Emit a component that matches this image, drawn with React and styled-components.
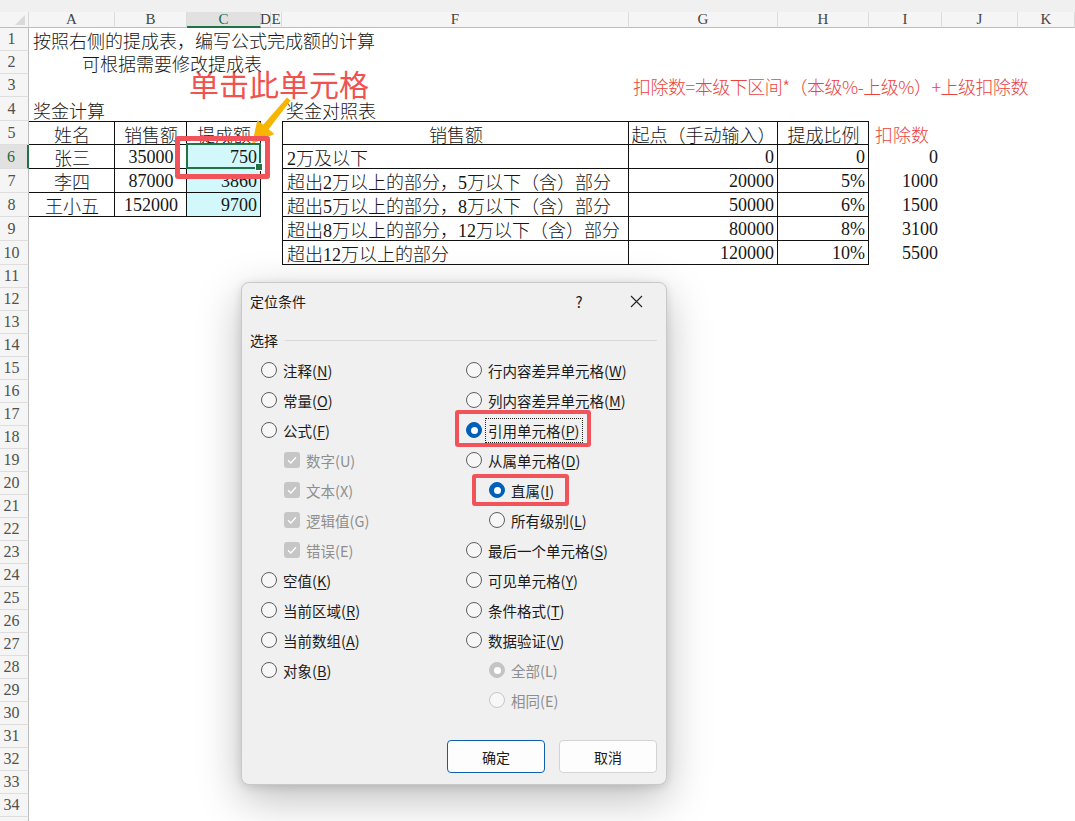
import React from 'react';
import styled, { createGlobalStyle, css } from 'styled-components';

const GlobalStyle = createGlobalStyle`
  html, body { margin: 0; padding: 0; background: #ffffff; overflow: hidden; }
  * { box-sizing: border-box; }
`;

const CELL_FONT = `"Liberation Serif", "Noto Sans CJK SC", serif`;
const UI_FONT = `"Noto Sans CJK SC", "Noto Sans", sans-serif`;

const COL_WIDTHS = [29, 86, 72, 74, 10, 11, 347, 149, 91, 73, 76, 57];
const LETTERS = ['A', 'B', 'C', 'D', 'E', 'F', 'G', 'H', 'I', 'J', 'K'];
const ROW_COUNT = 35;
const LAST_LABELLED_ROW = 34;
const rowHeight = (n) => (n <= 3 ? 23 : n <= 10 ? 24 : 23);

/* ---------- sheet cell contents ---------- */
const BOX = { box: true };
const cells = {
  A1: { text: '按照右侧的提成表，编写公式完成额的计算' },
  A2: { text: '可根据需要修改提成表', indent: 53 },
  G3: { text: '扣除数=本级下区间*（本级%-上级%）+上级扣除数', red: true, ui: true, tight: true },
  A4: { text: '奖金计算' },
  F4: { text: '奖金对照表' },

  A5: { ...BOX, top: true, text: '姓名', align: 'center' },
  B5: { ...BOX, top: true, text: '销售额', align: 'center' },
  C5: { ...BOX, top: true, text: '提成额', align: 'center' },
  A6: { ...BOX, text: '张三', align: 'center' },
  B6: { ...BOX, text: '35000', align: 'center' },
  C6: { ...BOX, text: '750', align: 'right', fill: true, selected: true },
  A7: { ...BOX, text: '李四', align: 'center' },
  B7: { ...BOX, text: '87000', align: 'center' },
  C7: { ...BOX, text: '3860', align: 'right', fill: true },
  A8: { ...BOX, text: '王小五', align: 'center' },
  B8: { ...BOX, text: '152000', align: 'center' },
  C8: { ...BOX, text: '9700', align: 'right', fill: true },

  F5: { ...BOX, top: true, left: true, text: '销售额', align: 'center' },
  G5: { ...BOX, top: true, text: '起点（手动输入）', align: 'center' },
  H5: { ...BOX, top: true, text: '提成比例', align: 'center' },
  I5: { text: '扣除数', red: true, indent: 6 },
};

const tiers = [
  ['2万及以下', '0', '0', '0'],
  ['超出2万以上的部分，5万以下（含）部分', '20000', '5%', '1000'],
  ['超出5万以上的部分，8万以下（含）部分', '50000', '6%', '1500'],
  ['超出8万以上的部分，12万以下（含）部分', '80000', '8%', '3100'],
  ['超出12万以上的部分', '120000', '10%', '5500'],
];
tiers.forEach(([label, start, rate, deduct], i) => {
  const r = 6 + i;
  cells[`F${r}`] = { ...BOX, left: true, text: label };
  cells[`G${r}`] = { ...BOX, text: start, align: 'right' };
  cells[`H${r}`] = { ...BOX, text: rate, align: 'right' };
  cells[`I${r}`] = { text: deduct, align: 'right', pr: 4 };
});

/* ---------- sheet ---------- */
const Page = styled.div`
  position: relative;
  width: 1075px;
  height: 821px;
  overflow: hidden;
  background: #ffffff;
`;

const TopStrip = styled.div`
  height: 12px;
  background: #f0f0f0;
`;

const Sheet = styled.div`
  display: grid;
  grid-template-columns: ${COL_WIDTHS.map((w) => `${w}px`).join(' ')};
  grid-template-rows: 16px ${Array.from({ length: ROW_COUNT }, (_, i) => `${rowHeight(i + 1)}px`).join(' ')};
`;

const Corner = styled.div`
  position: relative;
  background: #f5f5f5;
  border-right: 1px solid #d6d6d6;
  border-bottom: 1px solid #bdbdbd;
  &::after {
    content: '';
    position: absolute;
    right: 3px;
    bottom: 2px;
    width: 0;
    height: 0;
    border-left: 10px solid transparent;
    border-bottom: 10px solid #dadada;
  }
`;

const ColHead = styled.div`
  display: flex;
  align-items: center;
  justify-content: center;
  font-family: ${CELL_FONT};
  font-size: 15px;
  line-height: 1;
  color: ${(p) => (p.$active ? '#1e6b43' : '#444')};
  background: ${(p) => (p.$active ? '#e1e1e1' : '#f5f5f5')};
  border-right: 1px solid #dcdcdc;
  border-bottom: ${(p) => (p.$active ? '2px solid #217346' : '1px solid #bdbdbd')};
  white-space: nowrap;
  overflow: visible;
`;

const RowHead = styled.div`
  display: flex;
  align-items: center;
  justify-content: center;
  padding-right: 5px;
  font-family: ${CELL_FONT};
  font-size: 16px;
  color: ${(p) => (p.$active ? '#1e6b43' : '#505050')};
  background: ${(p) => (p.$active ? '#e1e1e1' : '#f5f5f5')};
  border-right: ${(p) => (p.$active ? '2px solid #217346' : '1px solid #bdbdbd')};
  border-bottom: 1px solid #dedede;
`;

const Cell = styled.div`
  position: relative;
  display: flex;
  align-items: center;
  justify-content: ${(p) => (p.$align === 'center' ? 'center' : p.$align === 'right' ? 'flex-end' : 'flex-start')};
  padding: 1px ${(p) => p.$pr ?? 3}px 0 ${(p) => p.$indent ?? 4}px;
  font-family: ${(p) => (p.$ui ? UI_FONT : CELL_FONT)};
  font-size: 18px;
  font-weight: 300;
  letter-spacing: ${(p) => (p.$tight ? '-0.5px' : '0')};
  color: ${(p) => (p.$red ? '#ea4440' : '#161616')};
  white-space: nowrap;
  overflow: visible;
  background: ${(p) => (p.$fill ? '#d3f8fb' : 'transparent')};
  ${(p) => p.$box && css`
    border-right: 1px solid #111;
    border-bottom: 1px solid #111;
  `}
  ${(p) => p.$top && css`border-top: 1px solid #111;`}
  ${(p) => p.$left && css`border-left: 1px solid #111;`}
`;

const CellText = styled.span`
  position: relative;
  z-index: 1;
`;

/* the active-cell frame and its fill handle */
const Selection = styled.span`
  position: absolute;
  top: -2px;
  left: -1px;
  right: -1px;
  bottom: -1px;
  border: 2px solid #217346;
  z-index: 2;
  &::after {
    content: '';
    position: absolute;
    right: -4px;
    bottom: -4px;
    width: 6px;
    height: 6px;
    background: #217346;
    border: 1px solid #ffffff;
  }
`;

/* ---------- annotations drawn on top of the sheet ---------- */
const Callout = styled.div`
  position: absolute;
  left: 189px;
  top: 65px;
  font-family: ${UI_FONT};
  font-size: 30px;
  line-height: 36px;
  color: #f0524f;
  white-space: nowrap;
`;

const ArrowSvg = styled.svg`
  position: absolute;
  left: 240px;
  top: 92px;
`;

const Frame = styled.div`
  position: absolute;
  left: ${(p) => p.$x}px;
  top: ${(p) => p.$y}px;
  width: ${(p) => p.$w}px;
  height: ${(p) => p.$h}px;
  border: ${(p) => p.$t}px solid #f0545a;
  border-radius: 3px;
  pointer-events: none;
  z-index: 3;
`;

/* ---------- dialog ---------- */
const Dialog = styled.div`
  position: absolute;
  left: 241px;
  top: 282px;
  width: 426px;
  height: 503px;
  display: flex;
  flex-direction: column;
  background: #f0f0f0;
  border: 1px solid #c9c9c9;
  border-radius: 8px;
  box-shadow: 0 14px 44px rgba(0, 0, 0, 0.26), 0 2px 10px rgba(0, 0, 0, 0.12);
  font-family: ${UI_FONT};
  color: #1b1b1b;
  z-index: 5;
`;

const TitleBar = styled.div`
  display: flex;
  align-items: center;
  height: 36px;
  padding: 0 10px 0 8px;
`;

const Title = styled.div`
  flex: 1;
  font-size: 14px;
`;

const TitleButton = styled.div`
  width: 40px;
  height: 30px;
  display: flex;
  align-items: center;
  justify-content: center;
  font-size: 15px;
  color: #222;
  margin-left: ${(p) => p.$gap ?? 0}px;
`;

const GroupHead = styled.div`
  display: flex;
  align-items: center;
  margin-top: 11px;
  height: 20px;
  padding: 0 9px 0 8px;
  font-size: 14px;
  &::after {
    content: '';
    flex: 1;
    height: 1px;
    margin-left: 7px;
    background: #d9d9d9;
  }
`;

const Options = styled.div`
  display: grid;
  grid-template-columns: 205px 1fr;
  margin-top: 5px;
  padding-left: 19px;
`;

const Column = styled.div`
  display: flex;
  flex-direction: column;
`;

const Option = styled.div`
  position: relative;
  display: flex;
  align-items: center;
  gap: 6px;
  height: 30px;
  padding-left: ${(p) => (p.$indent ? 23 : 0)}px;
  font-size: 14.5px;
  color: ${(p) => (p.$disabled ? '#8e8e8e' : '#1b1b1b')};
  white-space: nowrap;
  u { text-underline-offset: 2px; text-decoration-thickness: 1px; }
`;

const Label = styled.span`
  ${(p) => p.$focus && css`
    outline: 1px dotted #222;
    outline-offset: 1px;
    padding: 0 1px;
    margin-left: -1px;
  `}
`;

const RadioDot = styled.span`
  position: relative;
  flex: none;
  width: 16px;
  height: 16px;
  border-radius: 50%;
  border: 1px solid ${(p) => (p.$checked ? (p.$disabled ? '#c4c4c4' : '#005fb8') : p.$disabled ? '#c6c6c6' : '#5e5e5e')};
  background: ${(p) => (p.$checked ? (p.$disabled ? '#c4c4c4' : '#005fb8') : '#f7f7f7')};
  ${(p) => p.$checked && css`
    &::after {
      content: '';
      position: absolute;
      left: 50%;
      top: 50%;
      width: 7px;
      height: 7px;
      margin: -3.5px 0 0 -3.5px;
      border-radius: 50%;
      background: #ffffff;
    }
  `}
`;

const CheckBox = styled.span`
  flex: none;
  width: 16px;
  height: 16px;
  border-radius: 3px;
  background: #c6c6c6;
  display: flex;
  align-items: center;
  justify-content: center;
`;

const Footer = styled.div`
  margin-top: auto;
  display: flex;
  justify-content: flex-end;
  gap: 14px;
  padding: 0 9px 11px 0;
`;

const Button = styled.div`
  width: 98px;
  height: 33px;
  display: flex;
  align-items: center;
  justify-content: center;
  font-size: 14px;
  color: #1b1b1b;
  background: #fdfdfd;
  border-radius: 4px;
  border: 1px solid ${(p) => (p.$primary ? '#0f5fae' : '#d3d3d3')};
  ${(p) => p.$primary && css`box-shadow: inset 0 0 0 1px #ffffff;`}
`;

const Mark = styled.span`
  position: absolute;
  left: ${(p) => p.$l}px;
  top: ${(p) => p.$t}px;
  width: ${(p) => p.$w}px;
  height: ${(p) => p.$h}px;
  border: 4px solid #f0545a;
  border-radius: 3px;
  pointer-events: none;
`;

const Check = () => (
  <svg width="10" height="8" viewBox="0 0 10 8">
    <path d="M1 4.2 L3.8 7 L9 1.2" fill="none" stroke="#ffffff" strokeWidth="1.3" />
  </svg>
);

const Mnemonic = ({ text, keyChar }) => (
  <>
    {text}(<u>{keyChar}</u>)
  </>
);

const leftOptions = [
  { kind: 'radio', text: '注释', key: 'N' },
  { kind: 'radio', text: '常量', key: 'O' },
  { kind: 'radio', text: '公式', key: 'F' },
  { kind: 'check', text: '数字(U)' },
  { kind: 'check', text: '文本(X)' },
  { kind: 'check', text: '逻辑值(G)' },
  { kind: 'check', text: '错误(E)' },
  { kind: 'radio', text: '空值', key: 'K' },
  { kind: 'radio', text: '当前区域', key: 'R' },
  { kind: 'radio', text: '当前数组', key: 'A' },
  { kind: 'radio', text: '对象', key: 'B' },
];

const rightOptions = [
  { text: '行内容差异单元格', key: 'W' },
  { text: '列内容差异单元格', key: 'M' },
  { text: '引用单元格', key: 'P', checked: true, focus: true, mark: { l: -11, t: -5, w: 136, h: 37 } },
  { text: '从属单元格', key: 'D' },
  { text: '直属', key: 'I', indent: true, checked: true, mark: { l: 6, t: -1, w: 97, h: 32 } },
  { text: '所有级别', key: 'L', indent: true },
  { text: '最后一个单元格', key: 'S' },
  { text: '可见单元格', key: 'Y' },
  { text: '条件格式', key: 'T' },
  { text: '数据验证', key: 'V' },
  { plain: '全部(L)', indent: true, checked: true, disabled: true },
  { plain: '相同(E)', indent: true, disabled: true },
];

function GoToSpecialDialog() {
  return (
    <Dialog>
      <TitleBar>
        <Title>定位条件</Title>
        <TitleButton>?</TitleButton>
        <TitleButton $gap={17}>
          <svg width="13" height="13" viewBox="0 0 13 13">
            <path d="M1 1 L12 12 M12 1 L1 12" stroke="#222" strokeWidth="1.1" />
          </svg>
        </TitleButton>
      </TitleBar>
      <GroupHead>选择</GroupHead>
      <Options>
        <Column>
          {leftOptions.map((o) =>
            o.kind === 'check' ? (
              <Option key={o.text} $indent $disabled>
                <CheckBox>
                  <Check />
                </CheckBox>
                <Label>{o.text}</Label>
              </Option>
            ) : (
              <Option key={o.text}>
                <RadioDot />
                <Label>
                  <Mnemonic text={o.text} keyChar={o.key} />
                </Label>
              </Option>
            )
          )}
        </Column>
        <Column>
          {rightOptions.map((o) => (
            <Option key={o.text || o.plain} $indent={o.indent} $disabled={o.disabled}>
              <RadioDot $checked={o.checked} $disabled={o.disabled} />
              <Label $focus={o.focus}>{o.plain ? o.plain : <Mnemonic text={o.text} keyChar={o.key} />}</Label>
              {o.mark && <Mark $l={o.mark.l} $t={o.mark.t} $w={o.mark.w} $h={o.mark.h} />}
            </Option>
          ))}
        </Column>
      </Options>
      <Footer>
        <Button $primary>确定</Button>
        <Button>取消</Button>
      </Footer>
    </Dialog>
  );
}

/* arrow polygon in page coordinates, shifted into the svg box */
const ARROW = [
  [252, 144],
  [274.4, 134.0],
  [268.6, 129.2],
  [290.6, 100.4],
  [287.0, 97.6],
  [263.2, 124.8],
  [257.4, 120.0],
]
  .map(([x, y]) => `${x - 240},${y - 92}`)
  .join(' ');

export default function App() {
  const rows = Array.from({ length: ROW_COUNT }, (_, i) => i + 1);
  return (
    <Page>
      <GlobalStyle />
      <TopStrip />
      <Sheet>
        <Corner />
        {LETTERS.map((l) => (
          <ColHead key={l} $active={l === 'C'}>
            {l}
          </ColHead>
        ))}
        {rows.map((r) => (
          <React.Fragment key={r}>
            <RowHead $active={r === 6}>{r <= LAST_LABELLED_ROW ? r : ''}</RowHead>
            {LETTERS.map((l) => {
              const c = cells[`${l}${r}`] || {};
              return (
                <Cell
                  key={l}
                  $align={c.align}
                  $box={c.box}
                  $top={c.top}
                  $left={c.left}
                  $fill={c.fill}
                  $red={c.red}
                  $ui={c.ui}
                  $tight={c.tight}
                  $indent={c.indent}
                  $pr={c.pr}
                >
                  {c.text && <CellText>{c.text}</CellText>}
                  {c.selected && <Selection />}
                </Cell>
              );
            })}
          </React.Fragment>
        ))}
      </Sheet>

      <Callout>单击此单元格</Callout>
      <ArrowSvg width="60" height="60" viewBox="0 0 60 60">
        <polygon points={ARROW} fill="#f7b500" />
      </ArrowSvg>
      <Frame $x={175} $y={136} $w={95} $h={43} $t={5} />

      <GoToSpecialDialog />
    </Page>
  );
}
